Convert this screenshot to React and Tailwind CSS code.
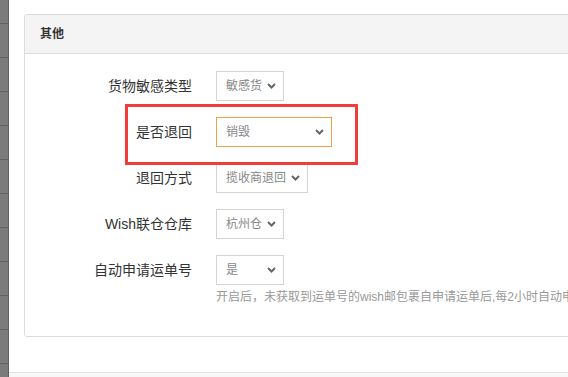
import React from "react";

const Chevron = () => (
  <svg width="9" height="6" viewBox="0 0 9 6" className="shrink-0">
    <polyline points="1,1 4.5,4.5 8,1" fill="none" stroke="#666" strokeWidth="2" />
  </svg>
);

const Select = ({ value, width, active }) => (
  <div
    className={`flex items-center justify-between h-[30px] pl-[9px] pr-[7px] bg-white border overflow-hidden ${width} ${
      active ? "border-[#f0a04a]" : "border-[#d4d4d4]"
    }`}
  >
    <span className="text-[12px] text-[#888] whitespace-nowrap overflow-hidden">{value}</span>
    <Chevron />
  </div>
);

const rows = [
  { label: "货物敏感类型", value: "敏感货", width: "w-[68px]" },
  { label: "是否退回", value: "销毁", width: "w-[116px]", active: true },
  { label: "退回方式", value: "揽收商退回", width: "w-[92px]" },
  { label: "Wish联仓仓库", value: "杭州仓", width: "w-[68px]" },
  { label: "自动申请运单号", value: "是", width: "w-[68px]" },
];

export default function App() {
  return (
    <div
      className="relative flex h-[377px] w-[568px] overflow-hidden bg-white"
      style={{ fontFamily: '"Liberation Sans", "Noto Sans CJK SC", sans-serif' }}
    >
      {/* left strip */}
      <div className="w-[9px] shrink-0 bg-[#7b7b7b] border-r border-[#5e5e5e] flex flex-col">
        <div className="h-[24px] shrink-0 border-b border-[#626262]" />
        {Array.from({ length: 11 }).map((_, i) => (
          <div key={i} className="h-[34px] shrink-0 border-b border-[#626262]" />
        ))}
      </div>

      <div className="flex-1 flex flex-col min-w-0">
        <div className="pt-[14px] pl-[15px]">
          <div className="w-[600px] border border-[#dcdcdc] rounded-[3px]">
            <div className="h-[39px] bg-[#f4f4f4] border-b border-[#dcdcdc] flex items-center pl-[15px] rounded-t-[3px]">
              <span className="text-[12px] font-bold text-[#333]">其他</span>
            </div>
            <div className="pt-[17px] pb-[31px] flex flex-col gap-[16px]">
              {rows.map((r, i) => (
                <div key={i} className="flex items-center">
                  <div className="w-[167px] text-right text-[14px] text-[#333] whitespace-nowrap">{r.label}</div>
                  <div className="ml-[24px]">
                    <Select value={r.value} width={r.width} active={r.active} />
                  </div>
                </div>
              ))}
              <div className="ml-[191px] -mt-[12px] text-[12px] leading-[16px] text-[#999] whitespace-nowrap">
                开启后，未获取到运单号的wish邮包裹自申请运单后,每2小时自动申请一次
              </div>
            </div>
          </div>
        </div>
        <div className="mt-auto h-[5px] border-t border-[#e2e2e2] bg-[#f7f7f7]" />
      </div>

      {/* annotation */}
      <div className="absolute left-[125px] top-[104px] w-[233px] h-[61px] border-[3px] border-[#f23b3b]" />
    </div>
  );
}
